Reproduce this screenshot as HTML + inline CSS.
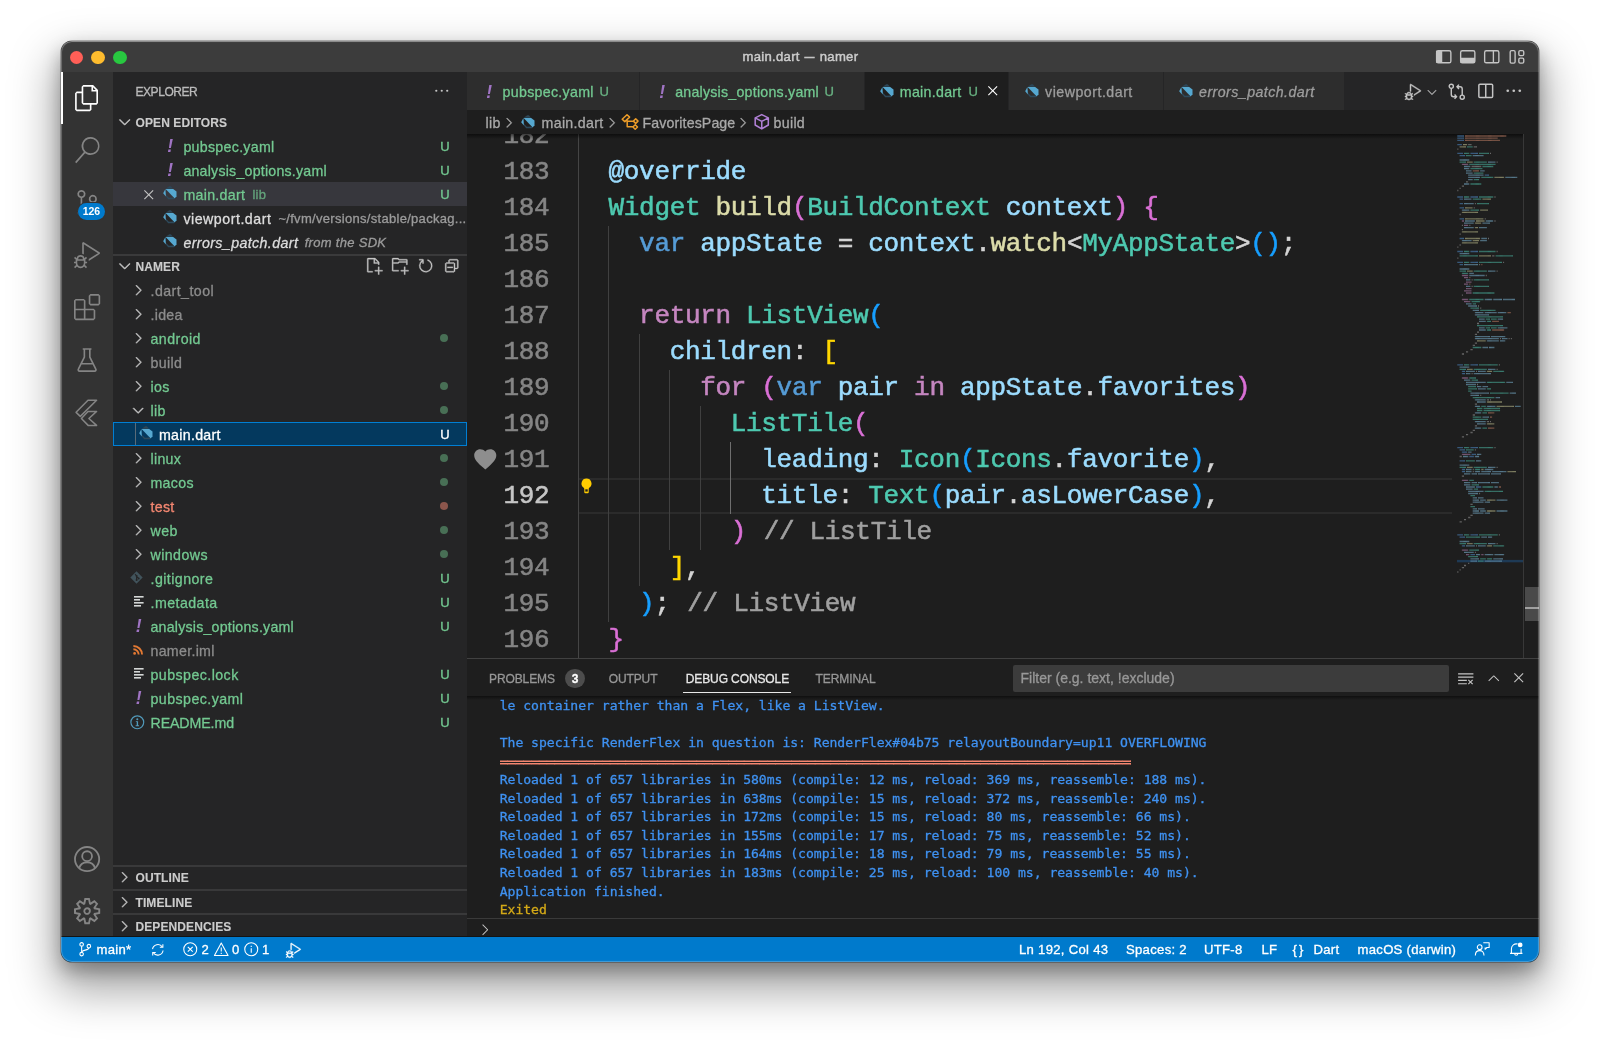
<!DOCTYPE html>
<html lang="en">
<head>
<meta charset="utf-8">
<title>main.dart — namer</title>
<style>
*{box-sizing:border-box;margin:0;padding:0}
html,body{width:1600px;height:1042px;overflow:hidden;background:#fff}
body{font-family:"Liberation Sans",sans-serif;font-size:14.2px;color:#ccc;position:relative;-webkit-text-stroke:.3px currentColor}
#win{position:absolute;left:60.5px;top:40.5px;width:1478.400px;height:921px;border-radius:11px;overflow:hidden;background:#1e1e1e;
 box-shadow:0 0 0 .5px rgba(0,0,0,.5),0 22px 45px 6px rgba(0,0,0,.36),0 9px 18px rgba(0,0,0,.28)}
#c{will-change:transform;position:absolute;left:-60.5px;top:-40.5px;width:1600px;height:1042px}
.a{position:absolute}
svg{display:block;overflow:visible}
/* title */
#title{left:60px;top:40px;width:1480px;height:31.5px;background:#3c3c3c}
#title .t{-webkit-text-stroke:.45px currentColor;left:0;width:100%;top:0;line-height:34px;text-align:center;font-size:14.2px;color:#ccc;letter-spacing:-.25px}
.tl{width:13.5px;height:13.5px;border-radius:50%;top:10.800px}
/* activity */
#act{left:60px;top:71.5px;width:53.4px;height:866px;background:#333}
/* sidebar */
#side{left:113.4px;top:71.5px;width:354px;height:866px;background:#252526}
.row{left:113.4px;width:354px;height:24px;line-height:26.2px;white-space:nowrap;letter-spacing:.3px}
.g{color:#73c991}
.ig{color:#8c8c8c}
.rd{color:#f48771}
.u{left:326.8px;font-size:13px;letter-spacing:0}
.d{font-size:13px;opacity:.75}
.yml{color:#a074c4;font-style:italic;font-weight:bold;font-size:17.500px;top:-.900px;letter-spacing:0;margin-left:.8px;-webkit-text-stroke:0}
.dot{left:326.4px;top:7.8px;width:8.4px;height:8.4px;border-radius:50%;background:#73c991;opacity:.45}
.hd{font-weight:bold;font-size:12px;color:#ccc;letter-spacing:.1px;-webkit-text-stroke:.12px currentColor;line-height:26.600px!important}
/* editor */
#tabs{left:467.4px;top:71.5px;width:1073px;height:38.5px;background:#252526}
.tab{top:0;height:38.5px;background:#2d2d2d;line-height:40px;white-space:nowrap;letter-spacing:.3px;border-right:1px solid #252526}
.tu{font-size:13px;letter-spacing:0;opacity:.85}
#bc{left:467.4px;top:110px;width:1073px;height:24px;background:#1e1e1e;line-height:26.600px;white-space:nowrap;color:#a9a9a9;letter-spacing:.3px}
#ed{left:467.4px;top:134px;width:1073px;height:524px;background:#1e1e1e;overflow:hidden}
.ln,.cl{font-family:"Liberation Mono",monospace;white-space:pre;font-size:26px;letter-spacing:-.327px;line-height:36px;height:36px;-webkit-text-stroke:.55px currentColor}
.ln{text-align:right}
#panel{left:467.4px;top:658px;width:1073px;height:279px;background:#1e1e1e;border-top:1px solid #414141}
.pt{top:667px;line-height:24px;font-size:12px;letter-spacing:-.1px;white-space:nowrap}
.co{left:499.700px;font-family:"DejaVu Sans Mono","Liberation Mono",monospace;font-size:13.100px;line-height:18.600px;white-space:pre;letter-spacing:-.03px}
.st{top:937px;line-height:25.600px;font-size:13.100px;color:#fff;letter-spacing:.3px;white-space:nowrap}
#status{left:60px;top:937px;width:1480px;height:25px;background:#007acc;color:#fff;line-height:24.5px;white-space:nowrap;font-size:13.1px}
</style>
</head>
<body>
<div id="win"><div id="c">

<!-- TITLE BAR -->
<div id="title" class="a">
  <div class="a t" style="left:682.500px;width:auto;text-align:left;white-space:pre;font-size:13.100px;letter-spacing:.3px">main.dart <span style="display:inline-block;transform:scaleX(.76);letter-spacing:0;margin:0 -.5px">—</span> namer</div>
  <div class="a tl" style="left:9.5px;background:#ff5f57"></div>
  <div class="a tl" style="left:31.4px;background:#febc2e"></div>
  <div class="a tl" style="left:53.3px;background:#28c840"></div>
</div>
<!-- ACTIVITY BAR -->
<div id="act" class="a"></div>
<div class="a" style="left:60.5px;top:71.5px;width:2.700px;height:52.600px;background:#fff"></div>
<!-- files -->
<svg class="a" style="left:74px;top:84.6px" width="26.2" height="26.2" viewBox="0 0 24 24" fill="#fff"><path d="M17.5 0H8.5L7 1.5V6H2.5L1 7.5V22.5699L2.5 24H14.5699L16 22.5699V18H20.7L22 16.5699V4.5L17.5 0ZM17.5 2.12L19.88 4.5H17.5V2.12ZM14.5 22.5H2.5V7.5H7V16.5699L8.5 18H14.5V22.5ZM20.5 16.5H8.5V1.5H16V6H20.5V16.5Z"/></svg>
<!-- search -->
<svg class="a" style="left:74px;top:137px" width="26.2" height="26.2" viewBox="0 0 24 24" fill="#858585"><path d="M15.25 0a8.25 8.25 0 0 0-6.18 13.72L1 22.88l1.12 1.12 8.05-9.12A8.251 8.251 0 1 0 15.25.01V0zm0 15a6.75 6.75 0 1 1 0-13.5 6.75 6.75 0 0 1 0 13.500z"/></svg>
<!-- scm -->
<svg class="a" style="left:74px;top:190px" width="26.2" height="26.2" viewBox="0 0 24 24" fill="#858585"><path d="M21.007 8.222A3.738 3.738 0 0 0 15.045 5.200a3.737 3.737 0 0 0 1.156 6.583 2.988 2.988 0 0 1-2.668 1.670h-2.990a4.456 4.456 0 0 0-2.989 1.165V7.400a3.737 3.737 0 1 0-1.494 0v9.117a3.776 3.776 0 1 0 1.816.099 2.990 2.990 0 0 1 2.668-1.667h2.990a4.484 4.484 0 0 0 4.223-3.039 3.736 3.736 0 0 0 3.250-3.687zM4.565 3.738a2.242 2.242 0 1 1 4.484 0 2.242 2.242 0 0 1-4.484 0zm4.484 16.441a2.242 2.242 0 1 1-4.484 0 2.242 2.242 0 0 1 4.484 0zm8.221-9.715a2.242 2.242 0 1 1 0-4.485 2.242 2.242 0 0 1 0 4.485z"/></svg>
<div class="a" style="left:77.800px;top:203.200px;width:27.200px;height:17.200px;border-radius:9px;background:#007acc;color:#fff;font-weight:bold;font-size:10.500px;line-height:17.600px;text-align:center;-webkit-text-stroke:0;box-shadow:0 0 0 1px #333">126</div>
<!-- debug -->
<svg class="a" style="left:74px;top:241.8px" width="26.2" height="26.2" viewBox="0 0 24 24" fill="#858585"><path d="M10.940 13.500l-1.320 1.320a3.730 3.730 0 0 0-7.240 0L1.060 13.500 0 14.560l1.720 1.720-.220.220V18H0v1.500h1.500v.080c.077.489.214.966.410 1.420L0 22.940 1.060 24l1.650-1.650A4.308 4.308 0 0 0 6 24a4.310 4.310 0 0 0 3.290-1.650L10.940 24 12 22.940 10.090 21c.198-.464.336-.951.410-1.450v-.100H12V18h-1.500v-1.500l-.220-.220L12 14.560l-1.060-1.060zM6 13.500a2.250 2.250 0 0 1 2.250 2.250h-4.500A2.250 2.250 0 0 1 6 13.500zm3 6a3.330 3.330 0 0 1-3 3 3.330 3.330 0 0 1-3-3v-2.250h6v2.250zm14.760-9.900v1.260L13.500 17.370V15.600l8.500-5.370L9 2v9.460a5.070 5.070 0 0 0-1.500-.720V.630L8.640 0l15.120 9.600z"/></svg>
<!-- extensions -->
<svg class="a" style="left:74px;top:294.2px" width="26.2" height="26.2" viewBox="0 0 24 24" fill="#858585"><path fill-rule="evenodd" clip-rule="evenodd" d="M13.500 1.500L15 0h7.500L24 1.500V9l-1.500 1.500H15L13.500 9V1.500zm1.500 0V9h7.500V1.500H15zM0 15V6l1.500-1.500H9L10.500 6v7.500H18l1.500 1.500v7.500L18 24H1.500L0 22.500V15zm9-1.500V6H1.500v7.500H9zM9 15H1.500v7.500H9V15zm1.500 7.500H18V15h-7.500v7.500z"/></svg>
<!-- beaker -->
<svg class="a" style="left:74px;top:346.6px" width="26.2" height="26.2" viewBox="0 0 24 24" fill="none" stroke="#858585" stroke-width="1.5" stroke-linejoin="round"><path d="M8 1.800H16M9.500 1.800V9.200L4 20.300a1.200 1.200 0 0 0 1.100 1.800H18.900a1.200 1.200 0 0 0 1.100-1.800L14.500 9.200V1.800M6.600 15.300H17.400"/></svg>
<!-- flutter -->
<svg class="a" style="left:74px;top:399px" width="26.200" height="26.200" viewBox="74 399 26.200 26.200" fill="none" stroke="#858585" stroke-width="1.500" stroke-linejoin="round"><path d="M88 400.300H96.600L80.300 416.400 76.100 412.350Z"/><path d="M88 411.400H96.600L88.900 418.500 96.600 425.400H88.150L81.400 418.500Z"/></svg>
<!-- account -->
<svg class="a" style="left:74px;top:845.6px" width="26.2" height="26.2" viewBox="0 0 24 24" fill="none" stroke="#858585" stroke-width="1.650"><circle cx="12" cy="12" r="11.100"/><circle cx="12" cy="9.300" r="4.500"/><path d="M4.700 20.400a7.600 7.600 0 0 1 14.600 0"/></svg>
<!-- settings -->
<svg class="a" style="left:74px;top:898px" width="26.2" height="26.2" viewBox="0 0 24 24" fill="#858585"><path fill-rule="evenodd" clip-rule="evenodd" d="M19.850 8.750l4.150.830v4.840l-4.150.830 2.350 3.520-3.430 3.430-3.520-2.350-.830 4.150H9.580l-.830-4.150-3.520 2.350-3.430-3.430 2.350-3.520L0 14.420V9.580l4.150-.830L1.800 5.230 5.230 1.800l3.520 2.350L9.580 0h4.840l.830 4.150 3.520-2.350 3.430 3.430-2.350 3.520zm-1.570 5.070l4-.810v-2l-4-.810-.540-1.300 2.290-3.430-1.430-1.430-3.430 2.290-1.300-.540-.810-4h-2l-.810 4-1.300.540-3.430-2.290-1.430 1.430L6.380 8.900l-.540 1.300-4 .810v2l4 .810.540 1.300-2.290 3.430 1.430 1.430 3.430-2.290 1.300.540.810 4h2l.810-4 1.300-.540 3.430 2.290 1.430-1.430-2.290-3.430.540-1.300zm-8.186-4.672A3.430 3.430 0 0 1 12 8.570 3.440 3.440 0 0 1 15.430 12a3.430 3.430 0 1 1-5.336-2.852zm.956 4.274c.281.188.612.288.950.288A1.700 1.700 0 0 0 13.710 12a1.710 1.710 0 1 0-2.660 1.422z"/></svg>
<!-- SIDEBAR -->
<div id="side" class="a"></div>
<div class="a" style="left:135.5px;top:79.6px;line-height:24px;font-size:12px;color:#bbb;letter-spacing:-.45px">EXPLORER</div>
<svg class="a" style="left:433px;top:82.3px" width="17.5" height="17.5" viewBox="0 0 16 16" fill="#c5c5c5"><circle cx="3" cy="8" r="1"/><circle cx="8" cy="8" r="1"/><circle cx="13" cy="8" r="1"/></svg>

<!-- open editors -->
<div class="a row hd" style="top:110px"><svg class="a" style="left:2.3px;top:3.3px" width="17.5" height="17.5" viewBox="0 0 16 16" fill="#c5c5c5" stroke="#c5c5c5" stroke-width=".5"><path d="M7.976 10.072l4.357-4.357.62.618L8.284 11h-.618L3 6.333l.619-.618 4.357 4.357z"/></svg><span class="a" style="left:22.1px">OPEN EDITORS</span></div>

<div class="a row g" style="top:134px"><span class="a yml" style="left:53px">!</span><span class="a" style="left:70px">pubspec.yaml</span><span class="a u">U</span></div>
<div class="a row g" style="top:158px"><span class="a yml" style="left:53px">!</span><span class="a" style="left:70px;letter-spacing:.22px">analysis_options.yaml</span><span class="a u">U</span></div>
<div class="a row g" style="top:182px;background:#37373d">
  <svg class="a" style="left:26.5px;top:3.5px" width="17.5" height="17.5" viewBox="0 0 16 16" fill="#c5c5c5"><path d="M8 8.707l3.646 3.647.708-.707L8.707 8l3.647-3.646-.707-.708L8 7.293 4.354 3.646l-.707.708L7.293 8l-3.646 3.646.707.708L8 8.707z"/></svg>
  <svg class="a dart" style="left:49.6px;top:4.2px" width="14" height="14" viewBox="0 0 14 14"><path d="M2.700 2.800L6.300 .300H7.900L10 2.800Z" fill="#2d4656"/><path d="M2.600 2.900H10.200L13.500 5.600V10.200L11.700 12.600Z" fill="#56a8d0"/><path d="M2.400 3.100L.200 7.300 2.900 10.500Z" fill="#56a8d0"/><path d="M2.900 10.500L5.200 13.200H11L11.700 12.600 10.600 11.600 5.800 11.800 3.200 9Z" fill="#2d4a5c"/></svg>
  <span class="a" style="left:70px">main.dart</span><span class="a d" style="left:139px">lib</span><span class="a u">U</span></div>
<div class="a row" style="top:206px">
  <svg class="a dart" style="left:49.6px;top:4.2px" width="14" height="14" viewBox="0 0 14 14"><path d="M2.700 2.800L6.300 .300H7.900L10 2.800Z" fill="#2d4656"/><path d="M2.600 2.900H10.200L13.500 5.600V10.200L11.700 12.600Z" fill="#56a8d0"/><path d="M2.400 3.100L.200 7.300 2.900 10.500Z" fill="#56a8d0"/><path d="M2.900 10.500L5.200 13.200H11L11.700 12.600 10.600 11.600 5.800 11.800 3.200 9Z" fill="#2d4a5c"/></svg>
  <span class="a" style="left:70px;color:#ddd;letter-spacing:.52px">viewport.dart</span><span class="a d" style="left:165px;color:#a8a8a8;opacity:.9">~/fvm/versions/stable/packag...</span></div>
<div class="a row" style="top:230px">
  <svg class="a dart" style="left:49.6px;top:4.2px" width="14" height="14" viewBox="0 0 14 14"><path d="M2.700 2.800L6.300 .300H7.900L10 2.800Z" fill="#2d4656"/><path d="M2.600 2.900H10.200L13.500 5.600V10.200L11.700 12.600Z" fill="#56a8d0"/><path d="M2.400 3.100L.200 7.300 2.900 10.500Z" fill="#56a8d0"/><path d="M2.900 10.500L5.200 13.200H11L11.700 12.600 10.600 11.600 5.800 11.800 3.200 9Z" fill="#2d4a5c"/></svg>
  <span class="a" style="left:70px;color:#ddd;font-style:italic;letter-spacing:.4px">errors_patch.dart</span><span class="a d" style="left:191.3px;color:#a8a8a8;opacity:.9;font-style:italic">from the SDK</span></div>

<!-- namer header -->
<div class="a" style="left:113.4px;top:254px;width:354px;height:2px;background:#3a3a3b"></div>
<div class="a row hd" style="top:253.800px"><svg class="a" style="left:2.3px;top:3.3px" width="17.5" height="17.5" viewBox="0 0 16 16" fill="#c5c5c5" stroke="#c5c5c5" stroke-width=".5"><path d="M7.976 10.072l4.357-4.357.62.618L8.284 11h-.618L3 6.333l.619-.618 4.357 4.357z"/></svg><span class="a" style="left:22.1px">NAMER</span>
  <svg class="a" style="left:251.5px;top:3.600px" width="17.5" height="17.5" viewBox="0 0 16 16" fill="#c5c5c5" stroke="#c5c5c5" stroke-width=".3"><path fill-rule="evenodd" clip-rule="evenodd" d="M9.5 1.1l3.4 3.5.1.4v2h-1V6H8V2H3v11h4v1H2.5l-.5-.5v-12l.5-.5h6.700l.3.1zM9 2v3h2.900L9 2zm4 14h-1v-3H9v-1h3V9h1v3h3v1h-3v3z"/></svg>
  <svg class="a" style="left:277.5px;top:3.600px" width="17.5" height="17.5" viewBox="0 0 16 16" fill="#c5c5c5" stroke="#c5c5c5" stroke-width=".3"><path fill-rule="evenodd" clip-rule="evenodd" d="M14.5 2H7.710l-.850-.850L6.510 1h-5l-.5.500v11l.5.500H7v-1H1.990V6h4.490l.350-.150.860-.860H14v1.500l-.001.510h1.011L15 6.500v-4l-.500-.500zm-.51 2h-6.500l-.350.150-.860.860H2v-3h4.290l.850.850.360.150H14l-.010.990zM13 16h-1v-3H9v-1h3V9h1v3h3v1h-3v3z"/></svg>
  <svg class="a" style="left:303.5px;top:3.600px" width="17.5" height="17.5" viewBox="0 0 16 16" fill="#c5c5c5" stroke="#c5c5c5" stroke-width=".3"><path fill-rule="evenodd" clip-rule="evenodd" d="M4.681 3H2V2h3.500l.500.500V6H5V4a5 5 0 1 0 4.530-.761l.302-.954A6 6 0 1 1 4.681 3z"/></svg>
  <svg class="a" style="left:329.5px;top:3.600px" width="17.5" height="17.5" viewBox="0 0 16 16" fill="#c5c5c5" stroke="#c5c5c5" stroke-width=".3"><path d="M9 9H4v1h5V9z"/><path fill-rule="evenodd" clip-rule="evenodd" d="M5 3l1-1h7l1 1v7l-1 1h-2v2l-1 1H3l-1-1V6l1-1h2V3zm1 2h4l1 1v4h2V3H6v2zm4 1H3v7h7V6z"/></svg>
</div>
<!-- tree -->
<div class="a row ig" style="top:277.9px"><svg class="a" style="left:16.9px;top:3.9px" width="16.4" height="16.4" viewBox="0 0 16 16" fill="#c5c5c5" stroke="#c5c5c5" stroke-width=".5"><path d="M10.072 8.024L5.715 3.667l.618-.62L11 7.716v.618L6.333 13l-.618-.619 4.357-4.357z"/></svg><span class="a" style="left:37.1px;letter-spacing:0.45px">.dart_tool</span></div>
<div class="a row ig" style="top:301.9px"><svg class="a" style="left:16.9px;top:3.9px" width="16.4" height="16.4" viewBox="0 0 16 16" fill="#c5c5c5" stroke="#c5c5c5" stroke-width=".5"><path d="M10.072 8.024L5.715 3.667l.618-.62L11 7.716v.618L6.333 13l-.618-.619 4.357-4.357z"/></svg><span class="a" style="left:37.1px;letter-spacing:0.3px">.idea</span></div>
<div class="a row g" style="top:325.9px"><svg class="a" style="left:16.9px;top:3.9px" width="16.4" height="16.4" viewBox="0 0 16 16" fill="#c5c5c5" stroke="#c5c5c5" stroke-width=".5"><path d="M10.072 8.024L5.715 3.667l.618-.62L11 7.716v.618L6.333 13l-.618-.619 4.357-4.357z"/></svg><span class="a" style="left:37.1px;letter-spacing:0.45px">android</span><i class="a dot"></i></div>
<div class="a row ig" style="top:349.9px"><svg class="a" style="left:16.9px;top:3.9px" width="16.4" height="16.4" viewBox="0 0 16 16" fill="#c5c5c5" stroke="#c5c5c5" stroke-width=".5"><path d="M10.072 8.024L5.715 3.667l.618-.62L11 7.716v.618L6.333 13l-.618-.619 4.357-4.357z"/></svg><span class="a" style="left:37.1px;letter-spacing:0.35px">build</span></div>
<div class="a row g" style="top:373.9px"><svg class="a" style="left:16.9px;top:3.9px" width="16.4" height="16.4" viewBox="0 0 16 16" fill="#c5c5c5" stroke="#c5c5c5" stroke-width=".5"><path d="M10.072 8.024L5.715 3.667l.618-.62L11 7.716v.618L6.333 13l-.618-.619 4.357-4.357z"/></svg><span class="a" style="left:37.1px;letter-spacing:0.3px">ios</span><i class="a dot"></i></div>
<div class="a row g" style="top:397.9px"><svg class="a" style="left:16.9px;top:3.9px" width="16.4" height="16.4" viewBox="0 0 16 16" fill="#c5c5c5" stroke="#c5c5c5" stroke-width=".5"><path d="M7.976 10.072l4.357-4.357.62.618L8.284 11h-.618L3 6.333l.619-.618 4.357 4.357z"/></svg><span class="a" style="left:37.1px;letter-spacing:0.3px">lib</span><i class="a dot"></i></div>
<div class="a row" style="top:421.9px;background:#04395e;outline:1px solid #007fd4;outline-offset:-1px;color:#fff"><i class="a" style="left:21.5px;top:1px;width:1px;height:22px;background:#5a6b78"></i><svg class="a dart" style="left:25.6px;top:4.6px" width="14" height="14" viewBox="0 0 14 14"><path d="M2.700 2.800L6.300 .300H7.900L10 2.800Z" fill="#2d4656"/><path d="M2.600 2.900H10.200L13.500 5.600V10.200L11.700 12.600Z" fill="#56a8d0"/><path d="M2.400 3.100L.200 7.300 2.900 10.500Z" fill="#56a8d0"/><path d="M2.900 10.500L5.200 13.200H11L11.700 12.600 10.600 11.600 5.800 11.800 3.200 9Z" fill="#2d4a5c"/></svg><span class="a" style="left:45.6px;letter-spacing:0.3px">main.dart</span><span class="a u">U</span></div>
<div class="a row g" style="top:445.9px"><svg class="a" style="left:16.9px;top:3.9px" width="16.4" height="16.4" viewBox="0 0 16 16" fill="#c5c5c5" stroke="#c5c5c5" stroke-width=".5"><path d="M10.072 8.024L5.715 3.667l.618-.62L11 7.716v.618L6.333 13l-.618-.619 4.357-4.357z"/></svg><span class="a" style="left:37.1px;letter-spacing:0.3px">linux</span><i class="a dot"></i></div>
<div class="a row g" style="top:469.9px"><svg class="a" style="left:16.9px;top:3.9px" width="16.4" height="16.4" viewBox="0 0 16 16" fill="#c5c5c5" stroke="#c5c5c5" stroke-width=".5"><path d="M10.072 8.024L5.715 3.667l.618-.62L11 7.716v.618L6.333 13l-.618-.619 4.357-4.357z"/></svg><span class="a" style="left:37.1px;letter-spacing:0.3px">macos</span><i class="a dot"></i></div>
<div class="a row rd" style="top:493.9px"><svg class="a" style="left:16.9px;top:3.9px" width="16.4" height="16.4" viewBox="0 0 16 16" fill="#c5c5c5" stroke="#c5c5c5" stroke-width=".5"><path d="M10.072 8.024L5.715 3.667l.618-.62L11 7.716v.618L6.333 13l-.618-.619 4.357-4.357z"/></svg><span class="a" style="left:37.1px;letter-spacing:0.3px">test</span><i class="a dot" style="background:#f48771;opacity:.5"></i></div>
<div class="a row g" style="top:517.9px"><svg class="a" style="left:16.9px;top:3.9px" width="16.4" height="16.4" viewBox="0 0 16 16" fill="#c5c5c5" stroke="#c5c5c5" stroke-width=".5"><path d="M10.072 8.024L5.715 3.667l.618-.62L11 7.716v.618L6.333 13l-.618-.619 4.357-4.357z"/></svg><span class="a" style="left:37.1px;letter-spacing:0.4px">web</span><i class="a dot"></i></div>
<div class="a row g" style="top:541.9px"><svg class="a" style="left:16.9px;top:3.9px" width="16.4" height="16.4" viewBox="0 0 16 16" fill="#c5c5c5" stroke="#c5c5c5" stroke-width=".5"><path d="M10.072 8.024L5.715 3.667l.618-.62L11 7.716v.618L6.333 13l-.618-.619 4.357-4.357z"/></svg><span class="a" style="left:37.1px;letter-spacing:0.45px">windows</span><i class="a dot"></i></div>
<div class="a row g" style="top:565.9px"><svg class="a" style="left:17px;top:5.5px" width="13" height="13" viewBox="0 0 13 13"><path d="M6.5 0.3 L12.7 6.5 L6.5 12.7 L0.3 6.5 Z" fill="#41535b"/><path d="M5 3.2 L6.6 4.8 M6.6 4.8 L6.6 9 M6.6 5.6 L8.6 7.4" stroke="#252526" stroke-width="1.1" fill="none"/><circle cx="6.6" cy="4.9" r="1" fill="#252526"/><circle cx="6.6" cy="9" r="1" fill="#252526"/><circle cx="8.7" cy="7.4" r="1" fill="#252526"/></svg><span class="a" style="left:37.1px;letter-spacing:0.45px">.gitignore</span><span class="a u">U</span></div>
<div class="a row g" style="top:589.9px"><svg class="a" style="left:21px;top:6.5px" width="10" height="11" viewBox="0 0 10 11" fill="#d4d7d6"><rect x="0" y="0" width="9.6" height="1.6"/><rect x="0" y="3" width="6" height="1.6"/><rect x="0" y="6" width="9.6" height="1.6"/><rect x="0" y="9" width="7" height="1.6"/></svg><span class="a" style="left:37.1px;letter-spacing:0.45px">.metadata</span><span class="a u">U</span></div>
<div class="a row g" style="top:613.9px"><span class="a yml" style="left:21.5px">!</span><span class="a" style="left:37.1px;letter-spacing:0.22px">analysis_options.yaml</span><span class="a u">U</span></div>
<div class="a row ig" style="top:637.9px"><svg class="a" style="left:19.5px;top:7px" width="10" height="10" viewBox="0 0 10 10" fill="none" stroke="#e37933" stroke-width="1.9"><circle cx="1.6" cy="8.4" r=".7" fill="#e37933" stroke-width="1.4"/><path d="M0.4 4.3 A5.3 5.3 0 0 1 5.7 9.6"/><path d="M0.4 0.95 A8.65 8.65 0 0 1 9.05 9.6"/></svg><span class="a" style="left:37.1px;letter-spacing:0.3px">namer.iml</span></div>
<div class="a row g" style="top:661.9px"><svg class="a" style="left:21px;top:6.5px" width="10" height="11" viewBox="0 0 10 11" fill="#d4d7d6"><rect x="0" y="0" width="9.6" height="1.6"/><rect x="0" y="3" width="6" height="1.6"/><rect x="0" y="6" width="9.6" height="1.6"/><rect x="0" y="9" width="7" height="1.6"/></svg><span class="a" style="left:37.1px;letter-spacing:0.45px">pubspec.lock</span><span class="a u">U</span></div>
<div class="a row g" style="top:685.9px"><span class="a yml" style="left:21.5px">!</span><span class="a" style="left:37.1px;letter-spacing:0.45px">pubspec.yaml</span><span class="a u">U</span></div>
<div class="a row g" style="top:709.9px"><svg class="a" style="left:16.6px;top:4.8px" width="14.6" height="14.6" viewBox="0 0 15 15"><circle cx="7.5" cy="7.5" r="6.6" fill="none" stroke="#519aba" stroke-width="1.2"/><circle cx="7.5" cy="4.3" r="1.05" fill="#519aba"/><path d="M6 6.4 H8.3 V10.6 H9.3 V11.5 H5.8 V10.6 H6.9 V7.3 H6 Z" fill="#519aba"/></svg><span class="a" style="left:37.1px;letter-spacing:-0.1px">README.md</span><span class="a u">U</span></div>
<div class="a" style="left:113.4px;top:865px;width:354px;height:2px;background:#39393a"></div>
<div class="a row hd" style="top:865.4px"><svg class="a" style="left:2.6px;top:3.9px" width="16.4" height="16.4" viewBox="0 0 16 16" fill="#c5c5c5" stroke="#c5c5c5" stroke-width=".5"><path d="M10.072 8.024L5.715 3.667l.618-.62L11 7.716v.618L6.333 13l-.618-.619 4.357-4.357z"/></svg><span class="a" style="left:22.1px">OUTLINE</span></div>
<div class="a" style="left:113.4px;top:889px;width:354px;height:2px;background:#39393a"></div>
<div class="a row hd" style="top:889.9px"><svg class="a" style="left:2.6px;top:3.9px" width="16.4" height="16.4" viewBox="0 0 16 16" fill="#c5c5c5" stroke="#c5c5c5" stroke-width=".5"><path d="M10.072 8.024L5.715 3.667l.618-.62L11 7.716v.618L6.333 13l-.618-.619 4.357-4.357z"/></svg><span class="a" style="left:22.1px">TIMELINE</span></div>
<div class="a" style="left:113.4px;top:913px;width:354px;height:2px;background:#39393a"></div>
<div class="a row hd" style="top:913.9px"><svg class="a" style="left:2.6px;top:3.9px" width="16.4" height="16.4" viewBox="0 0 16 16" fill="#c5c5c5" stroke="#c5c5c5" stroke-width=".5"><path d="M10.072 8.024L5.715 3.667l.618-.62L11 7.716v.618L6.333 13l-.618-.619 4.357-4.357z"/></svg><span class="a" style="left:22.1px">DEPENDENCIES</span></div>
<!-- title bar layout icons -->
<svg class="a" style="left:1435.2px;top:48px" width="17.5" height="17.5" viewBox="0 0 16 16" fill="none" stroke="#c5c5c5" stroke-width="1.250"><rect x="1.500" y="2.500" width="13" height="11" rx="1.500"/><path d="M1.500 3.200V12.800H6V3.200Z" fill="#c5c5c5"/></svg>
<svg class="a" style="left:1459.200px;top:48px" width="17.5" height="17.5" viewBox="0 0 16 16" fill="none" stroke="#c5c5c5" stroke-width="1.250"><rect x="1.500" y="2.500" width="13" height="11" rx="1.500"/><path d="M2 9.500H14V13H2Z" fill="#c5c5c5"/></svg>
<svg class="a" style="left:1483.200px;top:48px" width="17.5" height="17.5" viewBox="0 0 16 16" fill="none" stroke="#c5c5c5" stroke-width="1.250"><rect x="1.500" y="2.500" width="13" height="11" rx="1.500"/><path d="M9.500 2.500V13.500"/></svg>
<svg class="a" style="left:1507.600px;top:48px" width="17.5" height="17.5" viewBox="0 0 16 16" fill="none" stroke="#c5c5c5" stroke-width="1.250"><rect x="2" y="2.400" width="4.500" height="11.400" rx="1.200"/><rect x="9.900" y="2.400" width="4.500" height="4.600" rx="1.200"/><rect x="9.900" y="9.300" width="4.500" height="4.500" rx="1.200"/></svg>

<!-- TABS -->
<div id="tabs" class="a">
  <div class="a tab g" style="left:0;width:172.6px"><span class="a yml" style="left:18px;top:0">!</span><span class="a" style="left:35.2px">pubspec.yaml</span><span class="a tu" style="left:132px">U</span></div>
  <div class="a tab g" style="left:172.6px;width:224.600px"><span class="a yml" style="left:18.500px;top:0">!</span><span class="a" style="left:35.200px;letter-spacing:.24px">analysis_options.yaml</span><span class="a tu" style="left:184.600px">U</span></div>
  <div class="a tab g" style="left:397.200px;width:144.700px;background:#1e1e1e;border-right-color:#252526">
    <svg class="a dart" style="left:15.400px;top:12.300px" width="14" height="14" viewBox="0 0 14 14"><path d="M2.700 2.800L6.300 .300H7.900L10 2.800Z" fill="#2d4656"/><path d="M2.600 2.900H10.200L13.500 5.600V10.200L11.700 12.600Z" fill="#56a8d0"/><path d="M2.400 3.100L.200 7.300 2.900 10.500Z" fill="#56a8d0"/><path d="M2.900 10.500L5.200 13.200H11L11.700 12.600 10.600 11.600 5.800 11.800 3.200 9Z" fill="#2d4a5c"/></svg>
    <span class="a" style="left:35.200px">main.dart</span><span class="a tu" style="left:103.900px">U</span>
    <svg class="a" style="left:119px;top:10.700px" width="17.500" height="17.500" viewBox="0 0 16 16" fill="#fff"><path d="M8 8.707l3.646 3.647.708-.707L8.707 8l3.647-3.646-.707-.708L8 7.293 4.354 3.646l-.707.708L7.293 8l-3.646 3.646.707.708L8 8.707z"/></svg>
  </div>
  <div class="a tab" style="left:541.900px;width:154.500px;color:#9d9d9d">
    <svg class="a dart" style="left:15.600px;top:12.300px" width="14" height="14" viewBox="0 0 14 14"><path d="M2.700 2.800L6.300 .300H7.900L10 2.800Z" fill="#2d4656"/><path d="M2.600 2.900H10.200L13.500 5.600V10.200L11.700 12.600Z" fill="#56a8d0"/><path d="M2.400 3.100L.200 7.300 2.900 10.500Z" fill="#56a8d0"/><path d="M2.900 10.500L5.200 13.200H11L11.700 12.600 10.600 11.600 5.800 11.800 3.200 9Z" fill="#2d4a5c"/></svg>
    <span class="a" style="left:35.800px;letter-spacing:.5px">viewport.dart</span></div>
  <div class="a tab" style="left:696.400px;width:181.200px;color:#9d9d9d;font-style:italic">
    <svg class="a dart" style="left:15.200px;top:12.300px" width="14" height="14" viewBox="0 0 14 14"><path d="M2.700 2.800L6.300 .300H7.900L10 2.800Z" fill="#2d4656"/><path d="M2.600 2.900H10.200L13.500 5.600V10.200L11.700 12.600Z" fill="#56a8d0"/><path d="M2.400 3.100L.200 7.300 2.900 10.500Z" fill="#56a8d0"/><path d="M2.900 10.500L5.200 13.200H11L11.700 12.600 10.600 11.600 5.800 11.800 3.200 9Z" fill="#2d4a5c"/></svg>
    <span class="a" style="left:35.300px;letter-spacing:.45px">errors_patch.dart</span></div>
</div>
<!-- editor actions -->
<svg class="a" style="left:1405.300px;top:84.200px" width="16" height="16" viewBox="0 0 24 24" fill="#c5c5c5" stroke="#c5c5c5" stroke-width=".7"><path d="M10.940 13.500l-1.320 1.320a3.730 3.730 0 0 0-7.240 0L1.060 13.500 0 14.560l1.720 1.720-.220.220V18H0v1.500h1.500v.080c.077.489.214.966.410 1.420L0 22.940 1.060 24l1.650-1.650A4.308 4.308 0 0 0 6 24a4.310 4.310 0 0 0 3.290-1.650L10.940 24 12 22.940 10.090 21c.198-.464.336-.951.410-1.450v-.100H12V18h-1.500v-1.500l-.220-.220L12 14.560l-1.060-1.060zM6 13.500a2.250 2.250 0 0 1 2.250 2.250h-4.500A2.250 2.250 0 0 1 6 13.500zm3 6a3.330 3.330 0 0 1-3 3 3.330 3.330 0 0 1-3-3v-2.250h6v2.250zm14.760-9.900v1.260L13.500 17.370V15.600l8.500-5.370L9 2v9.460a5.070 5.070 0 0 0-1.500-.720V.630L8.640 0l15.120 9.600z"/></svg>
<svg class="a" style="left:1425.200px;top:84.600px" width="14" height="14" viewBox="0 0 16 16" fill="#b0b0b0" stroke="#b0b0b0" stroke-width=".4"><path d="M7.976 10.072l4.357-4.357.62.618L8.284 11h-.618L3 6.333l.619-.618 4.357 4.357z"/></svg>
<svg class="a" style="left:1448px;top:83.200px" width="17.500" height="17.500" viewBox="0 0 16 16" fill="none" stroke="#c5c5c5" stroke-width="1.300"><circle cx="3" cy="3" r="1.900"/><circle cx="13" cy="13" r="1.900"/><path d="M3 4.700V10.500a2 2 0 0 0 2 2H7.500M6 10.500l1.800 2-1.800 2M13 11.300V5.500a2 2 0 0 0-2-2H8.500M10 1.500l-1.800 2 1.800 2"/></svg>
<svg class="a" style="left:1477.400px;top:81.700px" width="17.500" height="17.500" viewBox="0 0 16 16" fill="none" stroke="#c5c5c5" stroke-width="1.350"><rect x="1.700" y="2" width="12.600" height="12.200" rx="1"/><path d="M8 2V14"/></svg>
<svg class="a" style="left:1505px;top:82.100px" width="17.500" height="17.500" viewBox="0 0 16 16" fill="#c5c5c5"><circle cx="2.500" cy="8" r="1.200"/><circle cx="8" cy="8" r="1.200"/><circle cx="13.500" cy="8" r="1.200"/></svg>

<!-- EDITOR -->
<div id="ed" class="a"></div>
<div class="a" style="left:579px;top:478px;width:873px;height:36px;border-top:2px solid #2b2b2b;border-bottom:2px solid #2b2b2b"></div>
<i class="a" style="left:578.2px;top:134px;width:1px;height:524px;background:#454545"></i>
<i class="a" style="left:608.1px;top:226px;width:1px;height:396px;background:#404040"></i>
<i class="a" style="left:638.6px;top:334px;width:1px;height:252px;background:#404040"></i>
<i class="a" style="left:669.0px;top:370px;width:1px;height:180px;background:#404040"></i>
<i class="a" style="left:699.9px;top:406px;width:1px;height:144px;background:#404040"></i>
<i class="a" style="left:730.3px;top:442px;width:1px;height:72px;background:#6e6e6e"></i>
<div class="a ln" style="left:467.4px;width:81.900px;top:118.4px;color:#858585">182</div>
<div class="a ln" style="left:467.4px;width:81.900px;top:154.4px;color:#858585">183</div>
<div class="a ln" style="left:467.4px;width:81.900px;top:190.4px;color:#858585">184</div>
<div class="a ln" style="left:467.4px;width:81.900px;top:226.4px;color:#858585">185</div>
<div class="a ln" style="left:467.4px;width:81.900px;top:262.4px;color:#858585">186</div>
<div class="a ln" style="left:467.4px;width:81.900px;top:298.4px;color:#858585">187</div>
<div class="a ln" style="left:467.4px;width:81.900px;top:334.4px;color:#858585">188</div>
<div class="a ln" style="left:467.4px;width:81.900px;top:370.4px;color:#858585">189</div>
<div class="a ln" style="left:467.4px;width:81.900px;top:406.4px;color:#858585">190</div>
<div class="a ln" style="left:467.4px;width:81.900px;top:442.4px;color:#858585">191</div>
<div class="a ln" style="left:467.4px;width:81.900px;top:478.4px;color:#c6c6c6">192</div>
<div class="a ln" style="left:467.4px;width:81.900px;top:514.4px;color:#858585">193</div>
<div class="a ln" style="left:467.4px;width:81.900px;top:550.4px;color:#858585">194</div>
<div class="a ln" style="left:467.4px;width:81.900px;top:586.4px;color:#858585">195</div>
<div class="a ln" style="left:467.4px;width:81.900px;top:622.4px;color:#858585">196</div>
<div class="a cl" style="left:578.0px;top:154.4px">  <span style="color:#9cdcfe">@override</span></div>
<div class="a cl" style="left:578.0px;top:190.4px">  <span style="color:#4ec9b0">Widget</span> <span style="color:#dcdcaa">build</span><span style="color:#da70d6">(</span><span style="color:#4ec9b0">BuildContext</span> <span style="color:#9cdcfe">context</span><span style="color:#da70d6">)</span> <span style="color:#da70d6">{</span></div>
<div class="a cl" style="left:578.0px;top:226.4px">    <span style="color:#569cd6">var</span> <span style="color:#9cdcfe">appState</span> <span style="color:#d4d4d4">=</span> <span style="color:#9cdcfe">context</span><span style="color:#d4d4d4">.</span><span style="color:#dcdcaa">watch</span><span style="color:#d4d4d4">&lt;</span><span style="color:#4ec9b0">MyAppState</span><span style="color:#d4d4d4">&gt;</span><span style="color:#179fff">()</span><span style="color:#d4d4d4">;</span></div>
<div class="a cl" style="left:578.0px;top:298.4px">    <span style="color:#c586c0">return</span> <span style="color:#4ec9b0">ListView</span><span style="color:#179fff">(</span></div>
<div class="a cl" style="left:578.0px;top:334.4px">      <span style="color:#9cdcfe">children</span><span style="color:#d4d4d4">:</span> <span style="color:#ffd700">[</span></div>
<div class="a cl" style="left:578.0px;top:370.4px">        <span style="color:#c586c0">for</span> <span style="color:#da70d6">(</span><span style="color:#569cd6">var</span> <span style="color:#9cdcfe">pair</span> <span style="color:#c586c0">in</span> <span style="color:#9cdcfe">appState</span><span style="color:#d4d4d4">.</span><span style="color:#9cdcfe">favorites</span><span style="color:#da70d6">)</span></div>
<div class="a cl" style="left:578.0px;top:406.4px">          <span style="color:#4ec9b0">ListTile</span><span style="color:#da70d6">(</span></div>
<div class="a cl" style="left:578.0px;top:442.4px">            <span style="color:#9cdcfe">leading</span><span style="color:#d4d4d4">:</span> <span style="color:#4ec9b0">Icon</span><span style="color:#179fff">(</span><span style="color:#4ec9b0">Icons</span><span style="color:#d4d4d4">.</span><span style="color:#9cdcfe">favorite</span><span style="color:#179fff">)</span><span style="color:#d4d4d4">,</span></div>
<div class="a cl" style="left:578.0px;top:478.4px">            <span style="color:#9cdcfe">title</span><span style="color:#d4d4d4">:</span> <span style="color:#4ec9b0">Text</span><span style="color:#179fff">(</span><span style="color:#9cdcfe">pair</span><span style="color:#d4d4d4">.</span><span style="color:#9cdcfe">asLowerCase</span><span style="color:#179fff">)</span><span style="color:#d4d4d4">,</span></div>
<div class="a cl" style="left:578.0px;top:514.4px">          <span style="color:#da70d6">)</span> <span style="color:#a0a0a0;position:relative;left:2.400px">// ListTile</span></div>
<div class="a cl" style="left:578.0px;top:550.4px">      <span style="color:#ffd700">]</span><span style="color:#d4d4d4">,</span></div>
<div class="a cl" style="left:578.0px;top:586.4px">    <span style="color:#179fff">)</span><span style="color:#d4d4d4">;</span> <span style="color:#a0a0a0;position:relative;left:2.400px">// ListView</span></div>
<div class="a cl" style="left:578.0px;top:622.4px">  <span style="color:#da70d6">}</span></div>
<svg class="a" style="left:472px;top:446.300px" width="26.500" height="26.500" viewBox="0 0 24 24" fill="#8e8e8e"><path d="M12 21.350l-1.450-1.320C5.400 15.360 2 12.280 2 8.500 2 5.420 4.420 3 7.500 3c1.740 0 3.410.810 4.500 2.090C13.090 3.810 14.760 3 16.500 3 19.580 3 22 5.420 22 8.500c0 3.780-3.400 6.860-8.550 11.540L12 21.350z"/></svg>
<svg class="a" style="left:579.900px;top:477.800px" width="13" height="16" viewBox="0 0 13 16"><path d="M6.500 0.500a5 5 0 0 0-3 9c.500.450.800 1 .800 1.600V14.300a1 1 0 0 0 1 1h2.400a1 1 0 0 0 1-1V11.100c0-.600.300-1.150.800-1.600a5 5 0 0 0-3-9z" fill="#ffcc00"/><rect x="5.300" y="11.300" width="2.400" height="2.300" fill="#1e1e1e"/></svg>
<div class="a" style="left:467.4px;top:134px;width:1057px;height:5px;background:linear-gradient(#000 0,rgba(0,0,0,0) 100%);opacity:.55"></div>
<svg class="a" style="left:0;top:0" width="1600" height="1042" viewBox="0 0 1600 1042" fill="none" stroke-width="1.300" stroke-dasharray=".78 .31" opacity=".9"><rect x="1457" y="559.9" width="67" height="2.400" fill="#1f3e5c" stroke="none"/><path stroke="#4a7fb5" d="M1457.5 136.0h6.5M1457.5 138.2h6.5M1457.5 140.4h6.5M1457.5 144.7h4.4M1457.5 153.4h5.5M1470.6 153.4h7.6M1459.7 155.6h5.5M1484.8 175.2h4.4M1457.5 197.0h5.5M1470.6 197.0h7.6M1459.7 199.2h3.3M1459.7 203.6h3.3M1459.7 207.9h4.4M1459.7 218.8h4.4M1459.7 238.5h4.4M1457.5 251.5h5.5M1470.6 251.5h7.6M1457.5 262.4h5.5M1470.6 262.4h7.6M1459.7 264.6h3.3M1457.5 364.9h5.5M1470.6 364.9h7.6M1461.9 371.4h3.3M1461.9 373.6h3.3M1457.5 447.7h5.5M1470.6 447.7h7.6M1459.7 449.9h5.5M1461.9 452.1h5.5M1471.7 454.3h4.4M1469.5 456.5h4.4M1459.7 460.8h5.5M1461.9 469.5h3.3M1461.9 471.7h3.3M1476.0 487.0h5.5M1457.5 534.9h5.5M1470.6 534.9h7.6M1459.7 537.1h5.5M1461.9 545.8h3.3M1470.6 554.6h4.4"/><path stroke="#45a08f" d="M1467.3 146.9h5.5M1464.0 153.4h5.5M1479.3 153.4h9.8M1466.2 155.6h5.5M1459.7 162.2h6.5M1473.8 162.2h13.1M1469.5 164.3h26.2M1482.6 166.5h10.9M1470.6 168.7h12.0M1473.8 173.1h9.8M1481.5 177.4h12.0M1473.8 179.6h5.5M1470.6 184.0h10.9M1464.0 197.0h5.5M1479.3 197.0h14.2M1472.8 199.2h8.7M1477.1 203.6h12.0M1470.6 210.1h8.7M1464.0 251.5h5.5M1479.3 251.5h16.4M1459.7 255.9h18.5M1495.7 255.9h17.4M1464.0 262.4h5.5M1479.3 262.4h22.9M1459.7 271.2h6.5M1473.8 271.2h13.1M1461.9 273.3h6.5M1473.8 279.9h15.3M1473.8 286.4h15.3M1472.8 293.0h21.8M1469.5 299.5h14.2M1471.7 301.7h8.7M1472.8 303.9h3.3M1470.6 308.2h8.7M1480.4 310.4h15.3M1477.1 316.9h26.2M1485.8 319.1h4.4M1491.3 319.1h5.5M1486.9 321.3h4.4M1477.1 325.7h26.2M1485.8 327.8h4.4M1491.3 327.8h5.5M1486.9 330.0h4.4M1472.8 347.5h8.7M1464.0 364.9h5.5M1479.3 364.9h18.5M1459.7 369.3h6.5M1473.8 369.3h13.1M1493.5 371.4h10.9M1469.5 378.0h6.5M1471.7 380.2h6.5M1486.9 382.3h18.5M1468.4 386.7h7.6M1468.4 388.9h8.7M1486.9 388.9h4.4M1468.4 391.1h3.3M1490.2 393.2h18.5M1472.8 397.6h21.8M1481.5 406.3h4.4M1477.1 408.5h5.5M1483.7 408.5h16.4M1477.1 410.7h5.5M1483.7 410.7h16.4M1482.6 412.9h4.4M1472.8 417.2h8.7M1472.8 419.4h15.3M1482.6 428.1h4.4M1464.0 447.7h5.5M1479.3 447.7h14.2M1466.2 449.9h7.6M1466.2 460.8h8.7M1459.7 467.4h6.5M1473.8 467.4h13.1M1474.9 469.5h5.5M1469.5 480.4h4.4M1471.7 484.8h7.6M1482.6 487.0h10.9M1473.8 489.2h4.4M1484.8 491.3h18.5M1470.6 495.7h4.4M1470.6 506.6h4.4M1464.0 534.9h5.5M1479.3 534.9h18.5M1466.2 537.1h14.2M1459.7 543.7h6.5M1473.8 543.7h13.1M1493.5 545.8h10.9M1469.5 550.2h9.8M1468.4 556.7h9.8M1480.4 558.9h5.5M1486.9 558.9h5.5M1478.2 561.1h5.5"/><path stroke="#a5a57c" d="M1463.0 144.7h4.4M1459.7 146.9h6.5M1467.3 162.2h5.5M1494.6 177.4h9.8M1482.6 199.2h8.7M1465.1 207.9h7.6M1480.4 210.1h7.6M1461.9 212.3h16.4M1465.1 218.8h18.5M1476.0 221.0h8.7M1474.9 223.2h6.5M1474.9 227.6h3.3M1461.9 231.9h16.4M1465.1 238.5h15.3M1472.8 240.6h6.5M1461.9 242.8h16.4M1479.3 255.9h12.0M1467.3 271.2h5.5M1477.1 340.9h8.7M1467.3 369.3h5.5M1486.9 371.4h5.5M1486.9 402.0h15.3M1496.7 406.3h17.4M1486.9 423.8h7.6M1467.3 467.4h5.5M1481.5 469.5h2.2M1507.6 471.7h8.7M1486.9 500.1h8.7M1486.9 511.0h8.7M1467.3 543.7h5.5M1486.9 545.8h5.5"/><path stroke="#a8705a" d="M1465.1 136.0h41.4M1465.1 138.2h32.7M1465.1 140.4h34.9M1472.8 170.9h6.5M1481.5 264.6h1.1M1469.5 277.7h1.1M1469.5 284.2h1.1M1507.6 312.6h3.3M1492.4 321.3h6.5M1492.4 330.0h12.0M1488.0 412.9h6.5M1490.2 417.2h2.2M1488.0 428.1h6.5M1498.9 487.0h2.2"/><path stroke="#6c9bb5" d="M1472.8 155.6h10.9M1459.7 160.0h9.8M1488.0 162.2h7.6M1464.0 166.5h6.5M1464.0 168.7h5.5M1466.2 170.9h5.5M1480.4 170.9h4.4M1466.2 173.1h6.5M1468.4 175.2h15.3M1468.4 177.4h12.0M1505.5 177.4h12.0M1468.4 179.6h4.4M1464.0 184.0h5.5M1464.0 199.2h7.6M1464.0 203.6h9.8M1461.9 210.1h7.6M1465.1 221.0h9.8M1485.8 221.0h7.6M1464.0 223.2h9.8M1482.6 223.2h7.6M1464.0 227.6h9.8M1479.3 227.6h7.6M1481.5 238.5h5.5M1461.9 240.6h9.8M1480.4 240.6h6.5M1459.7 253.7h9.8M1464.0 264.6h14.2M1459.7 269.0h9.8M1488.0 271.2h7.6M1469.5 273.3h4.4M1469.5 275.5h15.3M1466.2 279.9h4.4M1466.2 286.4h4.4M1484.8 299.5h7.6M1493.5 299.5h8.7M1503.3 299.5h12.0M1466.2 303.9h5.5M1468.4 306.0h8.7M1472.8 310.4h6.5M1474.9 312.6h8.7M1484.8 312.6h12.0M1497.8 312.6h8.7M1474.9 314.8h14.2M1479.3 319.1h5.5M1497.8 319.1h5.5M1479.3 321.3h6.5M1479.3 327.8h5.5M1497.8 327.8h9.8M1479.3 330.0h6.5M1474.9 336.6h15.3M1491.3 336.6h14.2M1474.9 338.7h24.0M1502.2 338.7h5.5M1486.9 340.9h12.0M1500.0 340.9h5.5M1482.6 347.5h5.5M1489.1 347.5h5.5M1459.7 367.1h9.8M1488.0 369.3h7.6M1466.2 371.4h8.7M1478.2 371.4h7.6M1466.2 373.6h4.4M1473.8 373.6h17.4M1464.0 380.2h6.5M1466.2 382.3h19.6M1506.5 382.3h6.5M1466.2 384.5h9.8M1477.1 386.7h4.4M1482.6 386.7h5.5M1478.2 388.9h7.6M1470.6 393.2h18.5M1509.8 393.2h6.5M1470.6 395.4h8.7M1495.7 397.6h4.4M1474.9 399.8h10.9M1477.1 402.0h8.7M1474.9 406.3h5.5M1486.9 406.3h8.7M1515.3 406.3h5.5M1474.9 412.9h6.5M1482.6 417.2h6.5M1474.9 421.6h10.9M1477.1 423.8h8.7M1474.9 428.1h6.5M1468.4 452.1h3.3M1477.1 454.3h4.4M1463.0 456.5h5.5M1474.9 456.5h4.4M1476.0 460.8h5.5M1459.7 465.2h9.8M1488.0 467.4h7.6M1466.2 469.5h5.5M1484.8 469.5h8.7M1466.2 471.7h5.5M1474.9 471.7h5.5M1481.5 471.7h9.8M1492.4 471.7h14.2M1464.0 473.9h6.5M1471.7 473.9h5.5M1478.2 473.9h12.0M1491.3 473.9h9.8M1464.0 482.6h6.5M1471.7 482.6h5.5M1478.2 482.6h12.0M1491.3 482.6h7.6M1464.0 484.8h6.5M1466.2 487.0h8.7M1494.6 487.0h3.3M1466.2 489.2h6.5M1468.4 491.3h15.3M1468.4 493.5h9.8M1472.8 497.9h4.4M1478.2 497.9h5.5M1472.8 500.1h6.5M1480.4 500.1h5.5M1496.7 500.1h10.9M1472.8 502.2h10.9M1484.8 502.2h5.5M1472.8 508.8h4.4M1478.2 508.8h6.5M1472.8 511.0h6.5M1480.4 511.0h5.5M1496.7 511.0h10.9M1472.8 513.1h10.9M1484.8 513.1h5.5M1481.5 537.1h5.5M1488.0 537.1h4.4M1459.7 541.5h9.8M1488.0 543.7h7.6M1466.2 545.8h8.7M1478.2 545.8h7.6M1464.0 552.4h9.8M1476.0 554.6h4.4M1484.8 554.6h8.7M1494.6 554.6h9.8M1470.6 558.9h8.7M1493.5 558.9h9.8M1470.6 561.1h6.5M1484.8 561.1h17.4"/><path stroke="#8a8a8a" d="M1468.4 144.7h3.3M1473.8 146.9h3.3M1457.5 149.1h1.1M1490.2 153.4h1.1M1496.7 162.2h1.1M1471.7 166.5h9.8M1466.2 181.8h2.2M1461.9 186.1h2.2M1459.7 188.3h1.1M1457.5 190.5h1.1M1494.6 197.0h1.1M1474.9 203.6h1.1M1473.8 207.9h1.1M1459.7 214.5h1.1M1484.8 218.8h1.1M1494.6 221.0h1.1M1461.9 225.4h1.1M1469.5 225.4h1.1M1461.9 229.7h1.1M1459.7 234.1h1.1M1488.0 238.5h1.1M1459.7 245.0h1.1M1457.5 247.2h1.1M1496.7 251.5h1.1M1492.4 255.9h2.2M1457.5 258.1h1.1M1503.3 262.4h1.1M1479.3 264.6h1.1M1496.7 271.2h1.1M1485.8 275.5h1.1M1471.7 279.9h1.1M1471.7 286.4h1.1M1461.9 295.1h1.1M1478.2 306.0h1.1M1480.4 308.2h1.1M1477.1 323.5h2.2M1477.1 332.2h2.2M1474.9 334.4h2.2M1500.0 338.7h1.1M1508.7 338.7h1.1M1510.9 338.7h1.1M1474.9 343.1h2.2M1472.8 345.3h2.2M1470.6 349.6h2.2M1466.2 351.8h2.2M1461.9 354.0h2.2M1498.9 364.9h1.1M1496.7 369.3h1.1M1476.0 371.4h1.1M1471.7 373.6h1.1M1477.1 384.5h1.1M1480.4 395.4h1.1M1486.9 399.8h2.2M1490.2 399.8h1.1M1474.9 404.1h2.2M1472.8 415.0h2.2M1486.9 421.6h2.2M1490.2 421.6h1.1M1474.9 425.9h2.2M1472.8 430.3h2.2M1470.6 432.5h2.2M1466.2 434.7h2.2M1461.9 436.8h2.2M1494.6 447.7h1.1M1474.9 449.9h1.1M1459.7 456.5h2.2M1496.7 467.4h1.1M1472.8 469.5h1.1M1472.8 471.7h1.1M1461.9 476.1h2.2M1479.3 493.5h1.1M1470.6 504.4h2.2M1470.6 515.3h2.2M1468.4 517.5h2.2M1464.0 519.7h2.2M1459.7 521.9h2.2M1498.9 534.9h1.1M1496.7 543.7h1.1M1476.0 545.8h1.1M1474.9 552.4h1.1M1468.4 563.3h1.1M1464.0 565.5h2.2M1461.9 567.6h2.2M1459.7 569.8h1.1M1457.5 572.0h1.1"/><path stroke="#9a6f98" d="M1461.9 164.3h6.5M1461.9 221.0h2.2M1464.0 225.4h4.4M1461.9 275.5h6.5M1464.0 277.7h4.4M1466.2 282.1h5.5M1464.0 284.2h4.4M1466.2 288.6h5.5M1464.0 290.8h7.6M1466.2 293.0h5.5M1461.9 299.5h6.5M1464.0 301.7h6.5M1461.9 378.0h6.5M1461.9 454.3h8.7M1461.9 480.4h6.5M1461.9 550.2h6.5M1466.2 554.6h3.3M1481.5 554.6h2.2"/></svg>
<i class="a" style="left:1523px;top:134px;width:1px;height:524px;background:#383838"></i>
<i class="a" style="left:1524.500px;top:587px;width:15px;height:34px;background:#4a4a4a"></i>
<i class="a" style="left:1524.500px;top:607.300px;width:15px;height:2.200px;background:#a0a0a0"></i>
<!-- BREADCRUMBS -->
<div id="bc" class="a">
  <span class="a" style="left:18.200px">lib</span>
  <svg class="a" style="left:33.200px;top:4.800px" width="15.500" height="15.500" viewBox="0 0 16 16" fill="#a9a9a9" stroke="#a9a9a9" stroke-width=".5"><path d="M10.072 8.024L5.715 3.667l.618-.62L11 7.716v.618L6.333 13l-.618-.619 4.357-4.357z"/></svg>
  <svg class="a dart" style="left:53.900px;top:4.600px" width="14" height="14" viewBox="0 0 14 14"><path d="M2.700 2.800L6.300 .300H7.900L10 2.800Z" fill="#2d4656"/><path d="M2.600 2.900H10.200L13.500 5.600V10.200L11.700 12.600Z" fill="#56a8d0"/><path d="M2.400 3.100L.200 7.300 2.900 10.500Z" fill="#56a8d0"/><path d="M2.900 10.500L5.200 13.200H11L11.700 12.600 10.600 11.600 5.800 11.800 3.200 9Z" fill="#2d4a5c"/></svg>
  <span class="a" style="left:74.200px">main.dart</span>
  <svg class="a" style="left:136.800px;top:4.800px" width="15.500" height="15.500" viewBox="0 0 16 16" fill="#a9a9a9" stroke="#a9a9a9" stroke-width=".5"><path d="M10.072 8.024L5.715 3.667l.618-.62L11 7.716v.618L6.333 13l-.618-.619 4.357-4.357z"/></svg>
  <svg class="a" style="left:150.600px;top:0" width="24" height="24" viewBox="618 110 24 24" fill="none" stroke="#ee9d28" stroke-width="1.500" stroke-linejoin="round"><path d="M622.200 119.200L627 114.700 629.600 117.100 624.800 121.600ZM627.200 120.300V126.800H633M627.200 121.300H633.600M635.700 118.800L638 121.100 635.700 123.400 633.400 121.100ZM635.200 124.700L637.500 127 635.200 129.300 632.900 127Z"/></svg>
  <span class="a" style="left:175.200px;letter-spacing:.1px">FavoritesPage</span>
  <svg class="a" style="left:267.800px;top:4.800px" width="15.500" height="15.500" viewBox="0 0 16 16" fill="#a9a9a9" stroke="#a9a9a9" stroke-width=".5"><path d="M10.072 8.024L5.715 3.667l.618-.62L11 7.716v.618L6.333 13l-.618-.619 4.357-4.357z"/></svg>
  <svg class="a" style="left:285.200px;top:3.300px" width="17.500" height="17.500" viewBox="0 0 16 16" fill="none" stroke="#b180d7" stroke-width="1.400" stroke-linejoin="round"><path d="M8 1.500L14 4.500V11L8 14.500 2 11V4.500ZM2 4.500L8 7.700 14 4.500M8 7.700V14.500"/></svg>
  <span class="a" style="left:306.200px">build</span>
</div>
<!-- PANEL -->
<div id="panel" class="a"></div>
<div class="a pt" style="left:489px;color:#969696">PROBLEMS</div>
<div class="a pt" style="left:608.7px;color:#969696">OUTPUT</div>
<div class="a pt" style="left:685.7px;color:#e7e7e7">DEBUG CONSOLE</div>
<div class="a pt" style="left:815.6px;color:#969696">TERMINAL</div>
<div class="a" style="left:565.300px;top:668.800px;width:19.600px;height:19.600px;border-radius:10px;background:#4d4d4d;color:#fff;font-size:12px;font-weight:bold;line-height:20.500px;text-align:center">3</div>
<i class="a" style="left:683px;top:692px;width:108px;height:1.100px;background:#e7e7e7"></i>
<div class="a" style="left:1012.500px;top:665px;width:436.500px;height:26.500px;background:#3c3c3c;color:#989898;font-size:14px;line-height:27.400px;padding-left:8px;white-space:nowrap;border-radius:2px">Filter (e.g. text, !exclude)</div>
<svg class="a" style="left:1457px;top:669.500px" width="17.500" height="17.500" viewBox="0 0 16 16" fill="#c5c5c5"><path d="M10 12.600l.700.700 1.600-1.600 1.600 1.600.800-.700L13 11l1.700-1.600-.800-.800-1.600 1.700-1.600-1.700-.700.800 1.600 1.600-1.600 1.600zM1 4h14V3H1v1zm0 3h14V6H1v1zm8 2.500V9H1v1h8v-.500zM9 13v-1H1v1h8z"/></svg>
<svg class="a" style="left:1485.200px;top:669.500px" width="17.500" height="17.500" viewBox="0 0 16 16" fill="#c5c5c5"><path d="M8.024 5.928l-4.357 4.357-.620-.618L7.716 5h.618L13 9.667l-.619.618-4.357-4.357z"/></svg>
<svg class="a" style="left:1509.700px;top:669.300px" width="17.500" height="17.500" viewBox="0 0 16 16" fill="#c5c5c5"><path d="M8 8.707l3.646 3.647.708-.707L8.707 8l3.647-3.646-.707-.708L8 7.293 4.354 3.646l-.707.708L7.293 8l-3.646 3.646.707.708L8 8.707z"/></svg>
<div class="a co" style="top:697.0px;color:#3f92f2">le container rather than a Flex, like a ListView.</div>
<div class="a co" style="top:734.1px;color:#3f92f2">The specific RenderFlex in question is: RenderFlex#04b75 relayoutBoundary=up11 OVERFLOWING</div>
<div class="a co" style="top:754.1px;color:#f48771;letter-spacing:0;width:631px;overflow:hidden;height:18.500px" aria-hidden="true">════════════════════════════════════════════════════════════════════════════════════</div>
<div class="a co" style="top:771.2px;color:#3f92f2">Reloaded 1 of 657 libraries in 580ms (compile: 12 ms, reload: 369 ms, reassemble: 188 ms).</div>
<div class="a co" style="top:789.8px;color:#3f92f2">Reloaded 1 of 657 libraries in 638ms (compile: 15 ms, reload: 372 ms, reassemble: 240 ms).</div>
<div class="a co" style="top:808.3px;color:#3f92f2">Reloaded 1 of 657 libraries in 172ms (compile: 15 ms, reload: 80 ms, reassemble: 66 ms).</div>
<div class="a co" style="top:826.9px;color:#3f92f2">Reloaded 1 of 657 libraries in 155ms (compile: 17 ms, reload: 75 ms, reassemble: 52 ms).</div>
<div class="a co" style="top:845.4px;color:#3f92f2">Reloaded 1 of 657 libraries in 164ms (compile: 18 ms, reload: 79 ms, reassemble: 55 ms).</div>
<div class="a co" style="top:864.0px;color:#3f92f2">Reloaded 1 of 657 libraries in 183ms (compile: 25 ms, reload: 100 ms, reassemble: 40 ms).</div>
<div class="a co" style="top:882.5px;color:#3f92f2">Application finished.</div>
<div class="a co" style="top:901.0px;color:#d4a917">Exited</div>
<div class="a" style="left:467.400px;top:696px;width:1072px;height:4px;background:linear-gradient(#000,rgba(0,0,0,0));opacity:.5"></div>
<i class="a" style="left:467.400px;top:918px;width:1073px;height:1px;background:#3a3a3a"></i>
<svg class="a" style="left:476.300px;top:920.500px" width="17.500" height="17.500" viewBox="0 0 16 16" fill="#c5c5c5"><path d="M10.072 8.024L5.715 3.667l.618-.62L11 7.716v.618L6.333 13l-.618-.619 4.357-4.357z"/></svg>
<!-- STATUS BAR -->
<div id="status" class="a"></div>
<i class="a" style="left:60px;top:936px;width:1480px;height:1px;background:#141414"></i>
<div class="a st" style="left:96.500px">main*</div>
<div class="a st" style="left:201.500px">2</div>
<div class="a st" style="left:232px">0</div>
<div class="a st" style="left:262px">1</div>
<div class="a st" style="left:1019px">Ln 192, Col 43</div>
<div class="a st" style="left:1126px">Spaces: 2</div>
<div class="a st" style="left:1204px">UTF-8</div>
<div class="a st" style="left:1261.500px">LF</div>
<div class="a st" style="left:1292.500px;letter-spacing:2.200px">{}</div>
<div class="a st" style="left:1313.500px">Dart</div>
<div class="a st" style="left:1357.500px">macOS (darwin)</div>
<!-- branch -->
<svg class="a" style="left:76.500px;top:941.300px" width="16.500" height="16.500" viewBox="0 0 16 16" fill="none" stroke="#fff" stroke-width="1.050"><circle cx="4.500" cy="3.300" r="1.700"/><circle cx="4.500" cy="12.700" r="1.700"/><circle cx="11.500" cy="5" r="1.700"/><path d="M4.500 5V11M11.500 6.700c0 2.500-7 1.800-7 4.300"/></svg>
<!-- sync -->
<svg class="a" style="left:149.600px;top:941.800px" width="15.600" height="15.600" viewBox="0 0 16 16" fill="none" stroke="#fff" stroke-width="1.100"><path d="M2.600 7.300a5.500 5.500 0 0 1 10-2.300M13.400 8.700a5.500 5.500 0 0 1-10 2.300"/><path d="M13.200 2.200V5.300H10.100M2.800 13.800V10.700H5.900" stroke-linejoin="miter"/></svg>
<!-- error -->
<svg class="a" style="left:181.800px;top:941.300px" width="16.500" height="16.500" viewBox="0 0 16 16" fill="none" stroke="#fff" stroke-width="1.050"><circle cx="8" cy="8" r="6.300"/><path d="M5.600 5.600l4.800 4.800M10.400 5.600l-4.800 4.800"/></svg>
<!-- warning -->
<svg class="a" style="left:212.600px;top:941.300px" width="16.500" height="16.500" viewBox="0 0 16 16" fill="none" stroke="#fff" stroke-width="1.050" stroke-linejoin="round"><path d="M8 1.900L14.600 14H1.400Z"/><path d="M8 6.300V10.200M8 11.300V12.500"/></svg>
<!-- info -->
<svg class="a" style="left:242.800px;top:941.300px" width="16.500" height="16.500" viewBox="0 0 16 16" fill="none" stroke="#fff" stroke-width="1.050"><circle cx="8" cy="8" r="6.300"/><path d="M8 7V11.500M8 4.500V5.800"/></svg>
<!-- debug start -->
<svg class="a" style="left:286.200px;top:942.800px" width="14.800" height="14.800" viewBox="0 0 24 24" fill="#fff" stroke="#fff" stroke-width=".6"><path d="M10.940 13.500l-1.320 1.320a3.730 3.730 0 0 0-7.240 0L1.060 13.500 0 14.560l1.720 1.720-.220.220V18H0v1.500h1.500v.080c.077.489.214.966.410 1.420L0 22.940 1.060 24l1.650-1.650A4.308 4.308 0 0 0 6 24a4.310 4.310 0 0 0 3.290-1.650L10.940 24 12 22.940 10.090 21c.198-.464.336-.951.410-1.450v-.100H12V18h-1.500v-1.500l-.220-.220L12 14.560l-1.060-1.060zM6 13.500a2.250 2.250 0 0 1 2.250 2.250h-4.500A2.250 2.250 0 0 1 6 13.500zm3 6a3.330 3.330 0 0 1-3 3 3.330 3.330 0 0 1-3-3v-2.250h6v2.250zm14.760-9.900v1.260L13.500 17.370V15.600l8.500-5.370L9 2v9.460a5.070 5.070 0 0 0-1.500-.720V.630L8.640 0l15.120 9.600z"/></svg>
<!-- feedback -->
<svg class="a" style="left:1474px;top:941.300px" width="16.500" height="16.500" viewBox="0 0 16 16" fill="none" stroke="#fff" stroke-width="1.050" stroke-linejoin="round"><circle cx="5.500" cy="6" r="2.300"/><path d="M1.300 14c0-3 1.800-4.700 4.200-4.700s4.200 1.700 4.200 4.700M9 1.700H14.700V6.300H12.500L10.800 8V6.300"/></svg>
<!-- bell -->
<svg class="a" style="left:1507.500px;top:941.300px" width="16.500" height="16.500" viewBox="0 0 16 16" fill="none" stroke="#fff" stroke-width="1.050" stroke-linejoin="round"><path d="M3.300 12V7.500a4.700 4.700 0 0 1 6-4.500M12.700 7.500V12M2 12H14M6.500 12.300a1.500 1.500 0 0 0 3 0"/><circle cx="11.800" cy="3.800" r="2.300" fill="#fff" stroke="none"/></svg>

<div class="a" style="left:60.500px;top:40.500px;width:1478.400px;height:921px;border-radius:11px;box-shadow:inset 0 0 0 1px rgba(255,255,255,.2),inset 0 0 2px 1px rgba(255,255,255,.08),inset 0 1px 0 rgba(255,255,255,.22)"></div>
</div></div>
</body>
</html>
